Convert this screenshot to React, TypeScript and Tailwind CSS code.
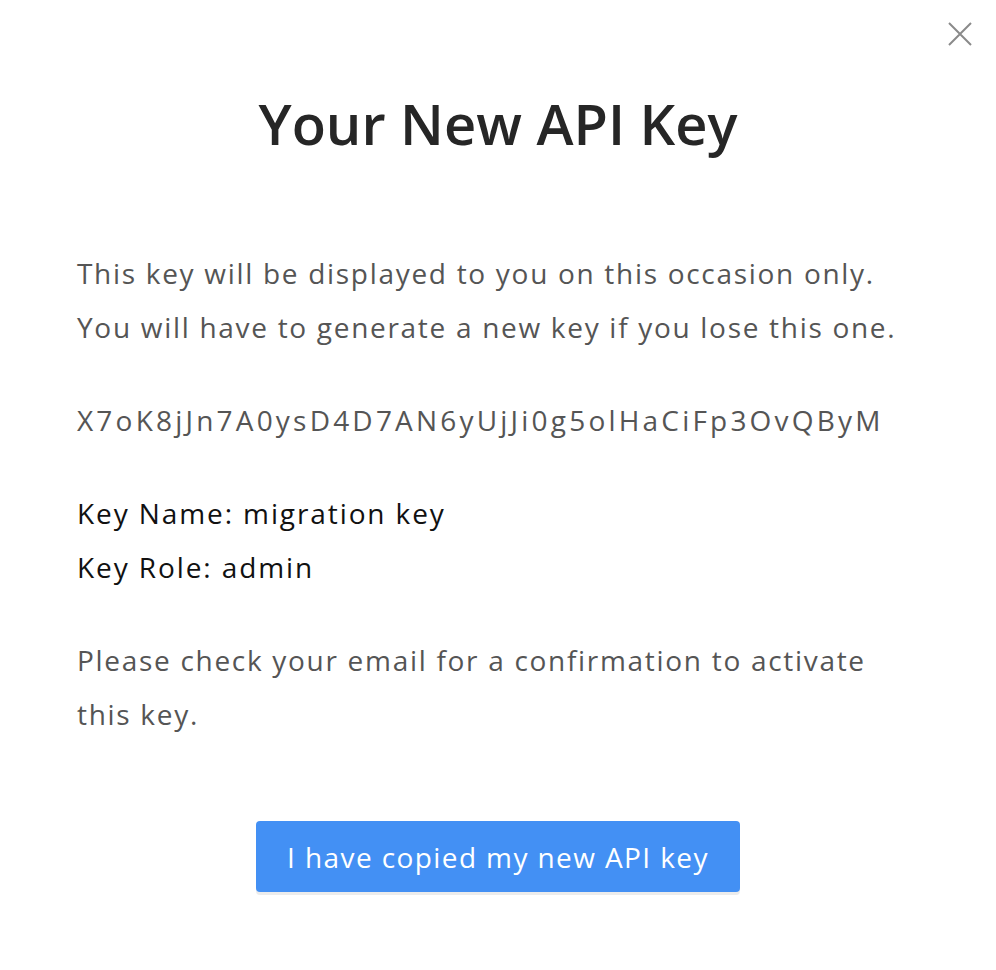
import React from 'react';

export default function App() {
  return (
    <div className="relative w-[996px] h-[970px] bg-white" style={{ fontFamily: '"Open Sans", "Noto Sans", sans-serif' }}>
      {/* Cerrar */}
      <button type="button" aria-label="close" className="absolute top-[22px] right-[24px] w-[24px] h-[24px] text-[#8a8a8a]">
        <svg viewBox="0 0 24 24" width="24" height="24" fill="none" stroke="currentColor" strokeWidth="2">
          <path d="M1 1L23 23M23 1L1 23" />
        </svg>
      </button>

      <div className="flex flex-col pt-[90px] px-[77px]">
        <h1 className="text-center text-[56px] leading-[67px] font-semibold text-[#262626]">Your New API Key</h1>

        <p className="mt-[89px] text-[28px] leading-[54px] tracking-[1.7px] text-[#555]">
          This key will be displayed to you on this occasion only.
          <br />
          You will have to generate a new key if you lose this one.
        </p>

        <p className="mt-[39px] text-[28px] leading-[54px] tracking-[3.2px] text-[#555]">X7oK8jJn7A0ysD4D7AN6yUjJi0g5olHaCiFp3OvQByM</p>

        <div className="mt-[39px] text-[28px] leading-[54px] tracking-[1.9px] text-[#111]">
          <div>Key Name: migration key</div>
          <div>Key Role: admin</div>
        </div>

        <p className="mt-[39px] w-[820px] text-[28px] leading-[54px] tracking-[1.7px] text-[#555]">
          Please check your email for a confirmation to activate this key.
        </p>

        <div className="mt-[80px] flex justify-center">
          <button
            type="button"
            className="w-[484px] h-[71px] rounded-[4px] bg-[#4390f4] text-white text-[28px] tracking-[1.4px] shadow-[0_3px_0_#ececec]"
          >
            I have copied my new API key
          </button>
        </div>
      </div>
    </div>
  );
}
